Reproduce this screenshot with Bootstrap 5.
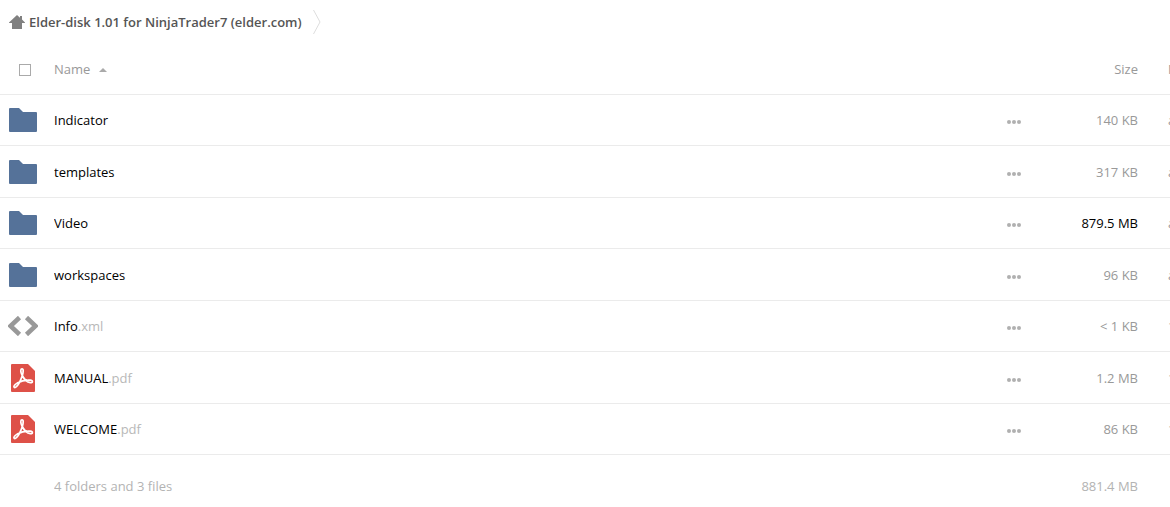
<!DOCTYPE html>
<html lang="en">
<head>
<meta charset="utf-8">
<meta name="viewport" content="width=device-width, initial-scale=1">
<title>Elder-disk 1.01 for NinjaTrader7</title>
<link href="https://cdn.jsdelivr.net/npm/bootstrap@5.3.0/dist/css/bootstrap.min.css" rel="stylesheet">
<style>
body { font-family: "Open Sans", "Noto Sans", sans-serif; font-size: 13px; line-height: 20px; color: #000; background: #fff; overflow-x: hidden; }
svg { display: block; flex: none; }
.crumbs { height: 44px; padding-left: 9px; gap: 11px; }
.crumbs a { color: #555; font-weight: 600; gap: 4px; }
.files { table-layout: fixed; width: 100%; border-collapse: separate; border-spacing: 0; }
.files th, .files td { padding: 0; font-weight: 400; vertical-align: middle; white-space: nowrap; overflow: hidden; }
.files thead th, .files tbody td, .files tbody th { border-bottom: 1px solid #ebebeb; }
.files thead tr { height: 51px; color: #999; }
.files tbody tr { height: 51px; }
.files tbody tr:nth-child(even) { height: 52px; }
.files tfoot tr { height: 62px; color: #b3b3b3; }
.col-icon { width: 54px; }
.col-menu { width: 44px; }
.col-size { width: 94px; }
.col-date { width: 32px; }
.files .date-cell { padding-left: 30px; color: #999; }
.size-cell { color: #999; }
.icon-box { width: 30px; height: 28px; margin-left: 8px; }
.ext { color: #b8b8b8; }
.check-all { appearance: none; display: block; width: 12px; height: 12px; margin: 2px 0 0 19px; border: 1px solid #aaa; background: #fff; }
.check-all:checked { background: #aaa; }
.plain-btn { border: 0; padding: 0; background: none; color: inherit; }
.sort-btn { gap: 9px; }
.sort-btn svg { margin-top: 2px; }
.more-btn { display: block; height: 20px; padding: 4px 7px 0; color: #b0b0b0; }
</style>
</head>
<body>
<svg width="0" height="0" class="position-absolute" aria-hidden="true">
  <symbol id="folder" viewBox="0 0 28 24"><path fill="#557299" d="M1 0H10L14 4H27Q28 4 28 5V23Q28 24 27 24H1Q0 24 0 23V1Q0 0 1 0Z"/></symbol>
  <symbol id="code" viewBox="0 0 30 20"><path fill="none" stroke="#999" stroke-width="4.600" d="M11.500 1.500L2.500 10L11.500 18.500M18.500 1.500L27.500 10L18.500 18.500"/></symbol>
  <symbol id="pdf" viewBox="0 0 24 28"><path fill="#de5148" d="M1 0H17L24 7V27Q24 28 23 28H1Q0 28 0 27V1Q0 0 1 0Z"/><path fill="none" stroke="#fff" stroke-width="1.700" stroke-linejoin="round" d="M10.900 4.800C9.200 5 9.600 8.200 11 11C12.700 14.500 15.700 18 19.200 18.600C22 19 22.200 16.300 19.400 16.100C15.600 15.800 10 16.900 6.200 19.100C3.600 20.700 2.300 22.400 3.200 23.300C4.400 24.300 6.800 21.700 8.500 18.300C10.600 14.100 12.300 9.300 12.200 6.500C12.200 5.400 11.700 4.700 10.900 4.800Z"/></symbol>
  <symbol id="dots" viewBox="0 0 14 4"><g fill="currentColor"><circle cx="2" cy="2" r="2"/><circle cx="7" cy="2" r="2"/><circle cx="12" cy="2" r="2"/></g></symbol>
</svg>
<nav class="crumbs d-flex align-items-center" aria-label="Breadcrumb">
  <a href="#" class="d-flex align-items-center text-decoration-none">
    <svg width="16" height="14" viewBox="0 0 16 14" aria-hidden="true"><path fill="#808080" d="M8 0L11 2.700V1H13V4.500L16 7.500V8H13V14H3V8H0V7.500Z"/></svg>
    <span>Elder-disk 1.01 for NinjaTrader7 (elder.com)</span>
  </a>
  <svg width="8" height="26" viewBox="0 0 8 26" aria-hidden="true"><path fill="none" stroke="#ddd" d="M.5 1L7 13L.5 25"/></svg>
</nav>
<main>
<table class="files">
  <colgroup><col class="col-icon"><col><col class="col-menu"><col class="col-size"><col class="col-date"></colgroup>
  <thead>
    <tr>
      <th><input type="checkbox" class="check-all" aria-label="Select all"></th>
      <th scope="col"><button type="button" class="plain-btn sort-btn d-flex align-items-center">Name <svg width="8" height="4" viewBox="0 0 8 4" aria-hidden="true"><path fill="#aaa" d="M4 0L8 4H0Z"/></svg></button></th>
      <th></th>
      <th scope="col" class="text-end">Size</th>
      <th scope="col" class="date-cell">M</th>
    </tr>
  </thead>
  <tbody>
    <tr><td><div class="icon-box d-flex align-items-center justify-content-center"><svg width="28" height="24"><use href="#folder"/></svg></div></td><th scope="row">Indicator</th><td><button type="button" class="plain-btn more-btn" aria-label="More"><svg width="14" height="4"><use href="#dots"/></svg></button></td><td class="size-cell text-end">140 KB</td><td class="date-cell">a</td></tr>
    <tr><td><div class="icon-box d-flex align-items-center justify-content-center"><svg width="28" height="24"><use href="#folder"/></svg></div></td><th scope="row">templates</th><td><button type="button" class="plain-btn more-btn" aria-label="More"><svg width="14" height="4"><use href="#dots"/></svg></button></td><td class="size-cell text-end">317 KB</td><td class="date-cell">a</td></tr>
    <tr><td><div class="icon-box d-flex align-items-center justify-content-center"><svg width="28" height="24"><use href="#folder"/></svg></div></td><th scope="row">Video</th><td><button type="button" class="plain-btn more-btn" aria-label="More"><svg width="14" height="4"><use href="#dots"/></svg></button></td><td class="text-end">879.5 MB</td><td class="date-cell">a</td></tr>
    <tr><td><div class="icon-box d-flex align-items-center justify-content-center"><svg width="28" height="24"><use href="#folder"/></svg></div></td><th scope="row">workspaces</th><td><button type="button" class="plain-btn more-btn" aria-label="More"><svg width="14" height="4"><use href="#dots"/></svg></button></td><td class="size-cell text-end">96 KB</td><td class="date-cell">a</td></tr>
    <tr><td><div class="icon-box d-flex align-items-center justify-content-center"><svg width="30" height="20"><use href="#code"/></svg></div></td><th scope="row">Info<span class="ext">.xml</span></th><td><button type="button" class="plain-btn more-btn" aria-label="More"><svg width="14" height="4"><use href="#dots"/></svg></button></td><td class="size-cell text-end">&lt; 1 KB</td><td class="date-cell">1</td></tr>
    <tr><td><div class="icon-box d-flex align-items-center justify-content-center"><svg width="24" height="28"><use href="#pdf"/></svg></div></td><th scope="row">MANUAL<span class="ext">.pdf</span></th><td><button type="button" class="plain-btn more-btn" aria-label="More"><svg width="14" height="4"><use href="#dots"/></svg></button></td><td class="size-cell text-end">1.2 MB</td><td class="date-cell">1</td></tr>
    <tr><td><div class="icon-box d-flex align-items-center justify-content-center"><svg width="24" height="28"><use href="#pdf"/></svg></div></td><th scope="row">WELCOME<span class="ext">.pdf</span></th><td><button type="button" class="plain-btn more-btn" aria-label="More"><svg width="14" height="4"><use href="#dots"/></svg></button></td><td class="size-cell text-end">86 KB</td><td class="date-cell">1</td></tr>
  </tbody>
  <tfoot>
    <tr><td></td><td>4 folders and 3 files</td><td></td><td class="text-end">881.4 MB</td><td></td></tr>
  </tfoot>
</table>
</main>
<script src="https://cdn.jsdelivr.net/npm/bootstrap@5.3.0/dist/js/bootstrap.bundle.min.js"></script>
</body>
</html>
